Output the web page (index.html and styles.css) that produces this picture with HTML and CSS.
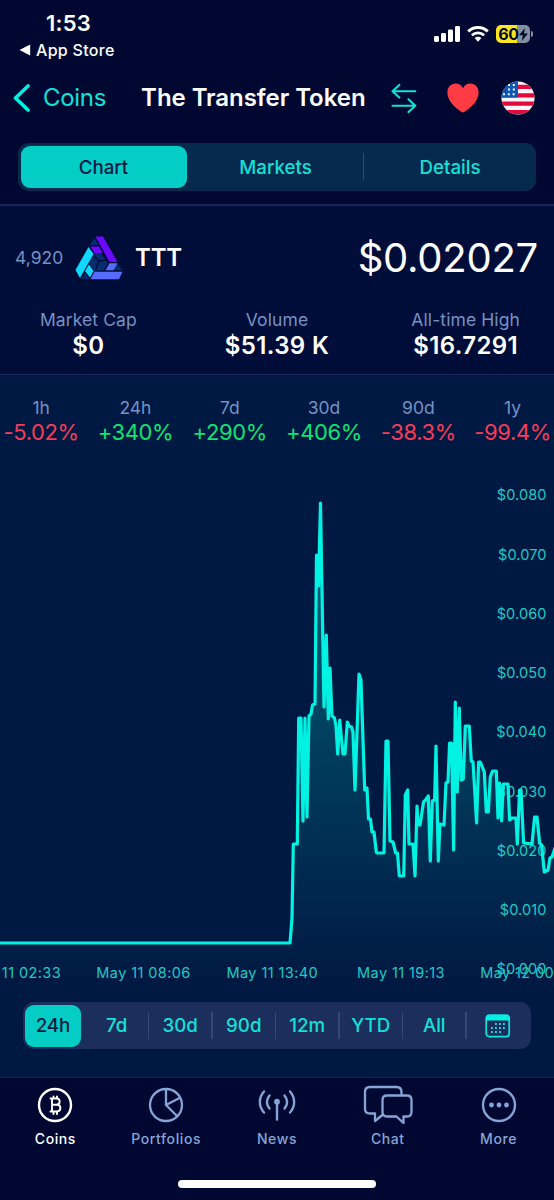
FILE: index.html
```html
<!DOCTYPE html>
<html lang="en">
<head>
    <meta charset="UTF-8">
    <meta name="viewport" content="width=device-width, initial-scale=1.0">
    <title>The Transfer Token</title>
    <link rel="stylesheet" href="styles.css">
</head>
<body>
    <div class="app">
        <div class="status-bar">
            <div class="status-left">
                <div class="time">1:53</div>
                <div class="back-app">
                    <svg width="12" height="12" viewBox="0 0 12 12"><path d="M0.5 6L11.2 0.6V11.4Z" fill="#fff"/></svg>
                    <span>App Store</span>
                </div>
            </div>
            <div class="status-icons">
                <svg class="signal" width="26" height="16" viewBox="0 0 26 16" fill="#fff">
                    <rect x="0" y="10" width="5" height="6" rx="1.4"/>
                    <rect x="7" y="7" width="5" height="9" rx="1.4"/>
                    <rect x="14" y="3.5" width="5" height="12.5" rx="1.4"/>
                    <rect x="21" y="0" width="5" height="16" rx="1.4"/>
                </svg>
                <svg class="wifi" width="22" height="16" viewBox="0 0 22 16" fill="none" stroke="#fff">
                    <path d="M1.2 5.4C6.8 0.2 15.2 0.2 20.8 5.4" stroke-width="3"/>
                    <path d="M4.9 9.2C8.5 6 13.5 6 17.1 9.2" stroke-width="2.8"/>
                    <path d="M7.6 12.1C9.5 10.3 12.5 10.3 14.4 12.1L11 15.7Z" fill="#fff" stroke="none"/>
                </svg>
                <div class="battery">
                    <span>60</span>
                    <svg width="9" height="13" viewBox="0 0 9 13"><path d="M6 0L0 7.2H3.9L2.7 13L9 5.5H5Z" fill="#000b2c"/></svg>
                </div>
                <div class="battery-cap"></div>
            </div>
        </div>

        <div class="nav">
            <svg class="chevron" width="18" height="28" viewBox="0 0 18 28" fill="none" stroke="#00f0e4" stroke-width="3.6" stroke-linecap="round" stroke-linejoin="round"><path d="M16 2L3.5 14L16 26"/></svg>
            <span class="back">Coins</span>
            <h1>The Transfer Token</h1>
            <div class="nav-icons">
                <svg width="26" height="30" viewBox="0 0 26 30" fill="none" stroke="#15e0d8" stroke-width="2.1" stroke-linecap="round" stroke-linejoin="round">
                    <path d="M24.3 8.3H1.5M8.3 1.9L1.5 8.3L8.3 14.6M1.5 22.7H24.3M17.5 16.3L24.3 22.7L17.5 29"/>
                </svg>
                <svg class="heart" width="32" height="30" viewBox="0 0 32 30"><path d="M16 29.6C12.6 27.6 0.4 19.8 0.4 9.4C0.4 4.3 4 0.5 8.6 0.5C12 0.5 14.7 2.3 16 5.2C17.3 2.3 20 0.5 23.4 0.5C28 0.5 31.6 4.3 31.6 9.4C31.6 19.8 19.4 27.6 16 29.6Z" fill="#ff3b44"/></svg>
                <svg width="34" height="34" viewBox="0 0 34 34">
                    <clipPath id="flag"><circle cx="17" cy="17" r="16.6"/></clipPath>
                    <g clip-path="url(#flag)">
                        <rect width="34" height="34" fill="#f8f5f8"/>
                        <path d="M0 5.8H34M0 14.3H34M0 22.7H34M0 31.2H34" stroke="#e20a3c" stroke-width="4.2"/>
                        <rect width="17" height="16.6" fill="#0d57b2"/>
                        <path d="M7 4H16M7 8.5H16M2 13.3H16" stroke="#f8f5f8" stroke-width="2" stroke-dasharray="2 2.8"/>
                    </g>
                </svg>
            </div>
        </div>

        <div class="tabs">
            <div class="tab active">Chart</div>
            <div class="tab">Markets</div>
            <div class="tab split">Details</div>
        </div>

        <div class="info">
            <div class="coin">
                <span class="rank">4,920</span>
                <svg class="logo" width="48" height="44" viewBox="0 0 48 44">
                    <path d="M20 1L1 33L7 43H40L47 33L28 1Z" fill="#000d38"/>
                    <path d="M19 2L15 9L24 9ZM42 27L47 34H37ZM7 43L10 37L15 43ZM17 18L25 16L33 27L29 34L19 35L14 27Z" fill="#082c70"/>
                    <path d="M17 18L24 25L21 33M24 25L33 24" fill="none" stroke="#000d38" stroke-width="1.4"/>
                    <path d="M20.5 0.5H28L42.5 26H34.5Z" fill="#6c08ff"/>
                    <path d="M15.5 10.5H24L27.5 17H19.5Z" fill="#6c08ff"/>
                    <path d="M13.5 11L18.5 18L5 42L0.5 34Z" fill="#10d8ff"/>
                    <path d="M14 28.5L18.5 35L15 41.5L10 35Z" fill="#10d8ff"/>
                    <path d="M34.5 27.2H42.5L38.5 34.2H30.5Z" fill="#586bff"/>
                    <path d="M19.5 35.8H47.5L44 43.2H15.5Z" fill="#586bff"/>
                </svg>
                <span class="symbol">TTT</span>
                <span class="price">$0.02027</span>
            </div>
            <div class="figures">
                <div class="figure"><span>Market Cap</span><b>$0</b></div>
                <div class="figure"><span>Volume</span><b>$51.39 K</b></div>
                <div class="figure"><span>All-time High</span><b>$16.7291</b></div>
            </div>
        </div>

        <div class="chart-panel">
            <div class="changes">
                <div class="change down"><span>1h</span><em>-5.02%</em></div>
                <div class="change up"><span>24h</span><em>+340%</em></div>
                <div class="change up"><span>7d</span><em>+290%</em></div>
                <div class="change up"><span>30d</span><em>+406%</em></div>
                <div class="change down"><span>90d</span><em>-38.3%</em></div>
                <div class="change down"><span>1y</span><em>-99.4%</em></div>
            </div>

            <svg class="chart" width="554" height="540" viewBox="0 450 554 540">
                <defs>
                    <linearGradient id="area" gradientUnits="userSpaceOnUse" x1="0" y1="500" x2="0" y2="985">
                        <stop offset="0" stop-color="#00f5e4" stop-opacity="0.34"/>
                        <stop offset="1" stop-color="#00f5e4" stop-opacity="0"/>
                    </linearGradient>
                </defs>
                <g class="axis prices" text-anchor="end">
                    <text x="546.5" y="500">$0.080</text>
                    <text x="546.5" y="559.5">$0.070</text>
                    <text x="546.5" y="618.5">$0.060</text>
                    <text x="546.5" y="678">$0.050</text>
                    <text x="546.5" y="737">$0.040</text>
                    <text x="546.5" y="796.5">$0.030</text>
                    <text x="546.5" y="855.5">$0.020</text>
                    <text x="546.5" y="914.5">$0.010</text>
                    <text x="546.5" y="974">$0.000</text>
                </g>
                <g class="axis" text-anchor="middle">
                    <text x="14" y="977.5">May 11 02:33</text>
                    <text x="143.5" y="977.5">May 11 08:06</text>
                    <text x="272.3" y="977.5">May 11 13:40</text>
                    <text x="401" y="977.5">May 11 19:13</text>
                    <text x="529" y="977.5">May 12 00:46</text>
                </g>
                <path id="fill" fill="url(#area)"/>
                <path id="line" fill="none" stroke="#00f2e2" stroke-width="3.2" stroke-linejoin="round" stroke-linecap="round"/>
            </svg>

            <div class="ranges">
                <div class="range active">24h</div>
                <div class="range">7d</div>
                <div class="range split">30d</div>
                <div class="range split">90d</div>
                <div class="range split">12m</div>
                <div class="range split">YTD</div>
                <div class="range split">All</div>
                <div class="range split">
                    <svg width="26" height="24" viewBox="0 0 26 24">
                        <rect x="1.2" y="1.2" width="23" height="21.4" rx="3" fill="none" stroke="#10e4da" stroke-width="1.7"/>
                        <path d="M1 6.6V4Q1 1 4 1H21.5Q24.5 1 24.5 4V6.6Z" fill="#00f0e4"/>
                        <path d="M10 10H21M6 14H21M6 18H17" stroke="#10e4da" stroke-width="1.8" stroke-dasharray="1.8 2.2"/>
                    </svg>
                </div>
            </div>
        </div>

        <div class="tab-bar">
            <div class="item active">
                <svg width="36" height="36" viewBox="0 0 36 36" fill="none" stroke="#fff" stroke-width="2.4" stroke-linecap="round" stroke-linejoin="round">
                    <circle cx="18" cy="18" r="16"/>
                    <path d="M13.5 11.5H19.5C23.7 11.5 23.7 17.7 19.5 17.7H15H20C24.5 17.7 24.5 24.5 20 24.5H13.5M15 11.5V24.5M16.5 9.5V11M20 9.500V11M16.5 25V27M20 25V27" stroke-width="1.9"/>
                </svg>
                <span>Coins</span>
            </div>
            <div class="item">
                <svg width="36" height="36" viewBox="0 0 36 36" fill="none" stroke="#86a5d6" stroke-width="2.3" stroke-linejoin="round">
                    <circle cx="18" cy="18" r="16"/>
                    <path d="M18 2V18L31.5 11M18 18L29 29"/>
                </svg>
                <span>Portfolios</span>
            </div>
            <div class="item">
                <svg width="40" height="36" viewBox="0 0 40 36" fill="none" stroke="#86a5d6" stroke-width="2.4" stroke-linecap="round">
                    <path d="M7 4.5C1.5 10.5 1.500 19.500 7 25.500M12.500 8.500C9.300 12.500 9.300 17.500 12.500 21.500M33 4.500C38.500 10.500 38.500 19.500 33 25.500M27.500 8.500C30.700 12.500 30.700 17.500 27.500 21.500M20 15V32.500"/>
                    <circle cx="20" cy="14.7" r="2.9" fill="#86a5d6" stroke="none"/>
                </svg>
                <span>News</span>
            </div>
            <div class="item">
                <svg width="50" height="40" viewBox="0 0 50 40" fill="none" stroke="#86a5d6" stroke-width="2.3" stroke-linejoin="round">
                    <path d="M38.500 10.500V7Q38.500 2 33.500 2H7Q2 2 2 7V24Q2 28.500 7 28.500H12V36L20 29.500"/>
                    <path d="M24 10.500H44Q48.500 10.500 48.500 15V27Q48.500 31.500 44 31.500H40.500V38L33.500 31.500H24Q19.500 31.500 19.500 27V15Q19.500 10.500 24 10.500Z"/>
                </svg>
                <span>Chat</span>
            </div>
            <div class="item">
                <svg width="36" height="36" viewBox="0 0 36 36" fill="none" stroke="#86a5d6" stroke-width="2.4">
                    <circle cx="18" cy="18" r="16"/>
                    <path d="M10.5 18H10.51M18 18H18.01M25.5 18H25.51" stroke-width="4.8" stroke-linecap="round"/>
                </svg>
                <span>More</span>
            </div>
        </div>
        <div class="home"></div>
    </div>
    <script src="chart.js"></script>
</body>
</html>
```

FILE: styles.css
```css
* {
    box-sizing: border-box;
}
body {
    margin: 0;
    background: #000831;
    font-family: Inter, "Liberation Sans", sans-serif;
    color: #fff;
}
svg {
    display: block;
    flex: none;
}
.app {
    width: 554px;
    height: 1200px;
    display: flex;
    flex-direction: column;
    overflow: hidden;
    white-space: nowrap;
}
.status-bar {
    height: 70px;
    display: flex;
    justify-content: space-between;
    padding: 0 21px 0 19px;
}
.time {
    margin: 9px 0 0 27px;
    font-size: 22px;
    font-weight: 600;
    line-height: 28px;
    letter-spacing: 0.2px;
}
.back-app {
    display: flex;
    align-items: center;
    gap: 5px;
    margin-top: 2px;
    font-size: 16px;
    font-weight: 500;
    line-height: 22px;
    letter-spacing: 0.3px;
}
.status-icons {
    display: flex;
    align-items: center;
    height: 68px;
}
.wifi {
    margin: 0 7px 0 7px;
}
.battery {
    width: 34px;
    height: 18px;
    border-radius: 5px;
    background: linear-gradient(to right, #fce51e 61%, #8090a0 61%);
    color: #000b2c;
    display: flex;
    align-items: center;
    justify-content: center;
    font-size: 16px;
    font-weight: 700;
    letter-spacing: -0.3px;
}
.battery-cap {
    width: 2px;
    height: 6px;
    margin-left: 1px;
    border-radius: 0 2px 2px 0;
    background: #8090a0;
}
.nav {
    height: 55px;
    display: flex;
    align-items: center;
    padding: 0 19px 0 12px;
}
.back {
    margin-left: 13px;
    color: #15e0d8;
    font-size: 24px;
    letter-spacing: -0.3px;
}
h1 {
    margin: 0 0 0 35px;
    font-size: 24px;
    font-weight: 600;
    letter-spacing: -0.05px;
}
.nav-icons {
    display: flex;
    align-items: center;
    margin-left: auto;
}
.heart {
    margin: 0 22px 0 30px;
}
.tabs {
    display: grid;
    grid-template-columns: 166px 178px 171px;
    width: 518px;
    height: 48px;
    margin: 18px 18px 13px;
    padding: 3px 0 3px 2.5px;
    border-radius: 11px;
    background: #052a4d;
}
.tab, .range {
    position: relative;
    display: flex;
    align-items: center;
    justify-content: center;
    color: #15e0d8;
    font-size: 18.7px;
    font-weight: 500;
}
.tab.active, .range.active {
    border-radius: 9px;
    background: #04cdc5;
    color: #051a44;
}
.split::before {
    content: "";
    position: absolute;
    left: -2px;
    top: 7px;
    bottom: 8px;
    width: 1.5px;
    background: #344775;
}
.info {
    height: 171px;
    border-top: 2px solid #17275a;
    border-bottom: 1px solid #17275a;
    background: #000d38;
}
.coin {
    display: flex;
    align-items: center;
    height: 103px;
    padding: 0 16px 0 15px;
}
.rank {
    width: 60px;
    color: #7692c4;
    font-size: 17.5px;
}
.symbol {
    margin-left: 12px;
    font-size: 24px;
    font-weight: 600;
    letter-spacing: -0.2px;
}
.price {
    margin-left: auto;
    font-size: 40px;
    letter-spacing: -0.25px;
}
.figures {
    display: grid;
    grid-template-columns: repeat(3, 1fr);
    margin: 0 -6px;
}
.figure {
    display: flex;
    flex-direction: column;
    align-items: center;
}
.figure span {
    color: #7692c4;
    font-size: 17.5px;
    line-height: 22px;
    letter-spacing: 0.1px;
}
.figure b {
    font-size: 24px;
    font-weight: 600;
    line-height: 30px;
    letter-spacing: 0.4px;
}
.chart-panel {
    height: 703px;
    border-bottom: 1px solid #11264f;
    background: #001943;
}
.changes {
    display: grid;
    grid-template-columns: repeat(6, 94.3px);
    height: 75px;
    padding-top: 22px;
    margin-left: -6px;
}
.change {
    display: flex;
    flex-direction: column;
    align-items: center;
}
.change span {
    color: #7692c4;
    font-size: 17.5px;
    line-height: 22px;
}
.change em {
    font-style: normal;
    font-size: 22px;
    line-height: 26px;
    letter-spacing: -0.4px;
}
.up em {
    color: #12e371;
}
.down em {
    color: #f63d58;
}
.axis {
    fill: #20c9c3;
    font-size: 14.5px;
    letter-spacing: 0.4px;
}
.axis.prices {
    letter-spacing: 0.1px;
}
.ranges {
    display: grid;
    grid-template-columns: 62px repeat(7, 63.5px);
    width: 508px;
    height: 47px;
    margin: 12px 23px 0;
    border-radius: 11px;
    background: #1b2e5c;
}
.range.active {
    width: 56px;
    height: 42px;
    margin: 2.5px 0 0 2px;
}
.range.split::before {
    top: 10px;
    bottom: 10px;
    left: -1px;
}
.tab-bar {
    display: grid;
    grid-template-columns: repeat(5, 1fr);
    height: 102px;
    flex: none;
}
.item {
    display: flex;
    flex-direction: column;
    align-items: center;
    color: #86a5d6;
    font-size: 14px;
    font-weight: 500;
    letter-spacing: 0.6px;
}
.item svg {
    height: 40px;
    margin-top: 7px;
}
.item span {
    margin-top: 4px;
    line-height: 20px;
}
.item.active {
    color: #fff;
}
.home {
    width: 198px;
    height: 8px;
    margin: 0 auto;
    border-radius: 4px;
    background: #fff;
}
```

FILE: chart.js
```javascript
const points = [
    [-3, 943], [290, 943], [292, 918], [293.3, 844], [297.3, 844], [298.7, 718], [301, 718],
    [303, 821], [305, 718], [307, 817], [309, 716], [311, 714], [312.5, 705], [315, 704],
    [316.5, 555], [318.5, 586], [320.5, 503], [324, 707], [326.3, 635], [328.3, 719],
    [330, 668], [332, 716], [334.5, 718], [336, 726], [337.7, 754], [339.7, 720], [343, 754],
    [345, 754], [347.3, 722], [349, 726], [351.5, 727], [353, 732], [355, 790], [359, 674],
    [361, 680], [364.7, 790], [367, 788], [368.5, 819], [370.5, 819], [372, 832], [374, 832],
    [376.3, 852], [377, 853], [384, 853], [386, 741], [388, 741], [390, 841], [393, 842],
    [395.7, 853], [397.5, 853], [399.3, 876], [403.7, 876], [405.3, 795], [407.7, 790],
    [409, 844], [413, 844], [415, 876], [417, 806], [418, 825], [420, 825], [423.5, 802],
    [425.6, 800], [428.3, 796], [430.3, 861], [432.3, 801], [434.6, 800], [436, 746],
    [438.3, 861], [440, 824], [444, 825], [446, 783], [448, 782], [449.6, 743], [451.6, 743],
    [453.6, 850], [455.3, 702], [457.3, 792], [459.3, 708], [461.3, 780], [463.3, 779],
    [465.3, 726], [469.3, 726], [471.3, 761], [473, 762], [476.6, 823], [478.6, 762],
    [480.3, 762], [484.3, 772], [486.3, 812], [488.3, 812], [490.3, 777], [492.6, 771],
    [496.3, 771], [498, 818], [499.6, 783], [501.6, 821], [503.3, 784], [508, 784],
    [509.6, 820], [512, 818], [516, 818], [517.3, 844], [519.6, 790], [521, 790],
    [523.6, 843], [532, 844], [534.6, 817], [537, 817], [539.6, 843], [541.6, 845],
    [544.3, 872], [548, 870], [550, 858], [552, 857], [555, 848]
];

const d = "M" + points.map(p => p.join(" ")).join("L");
document.getElementById("line").setAttribute("d", d);
document.getElementById("fill").setAttribute("d", d + "L555 975L-3 975Z");
```
